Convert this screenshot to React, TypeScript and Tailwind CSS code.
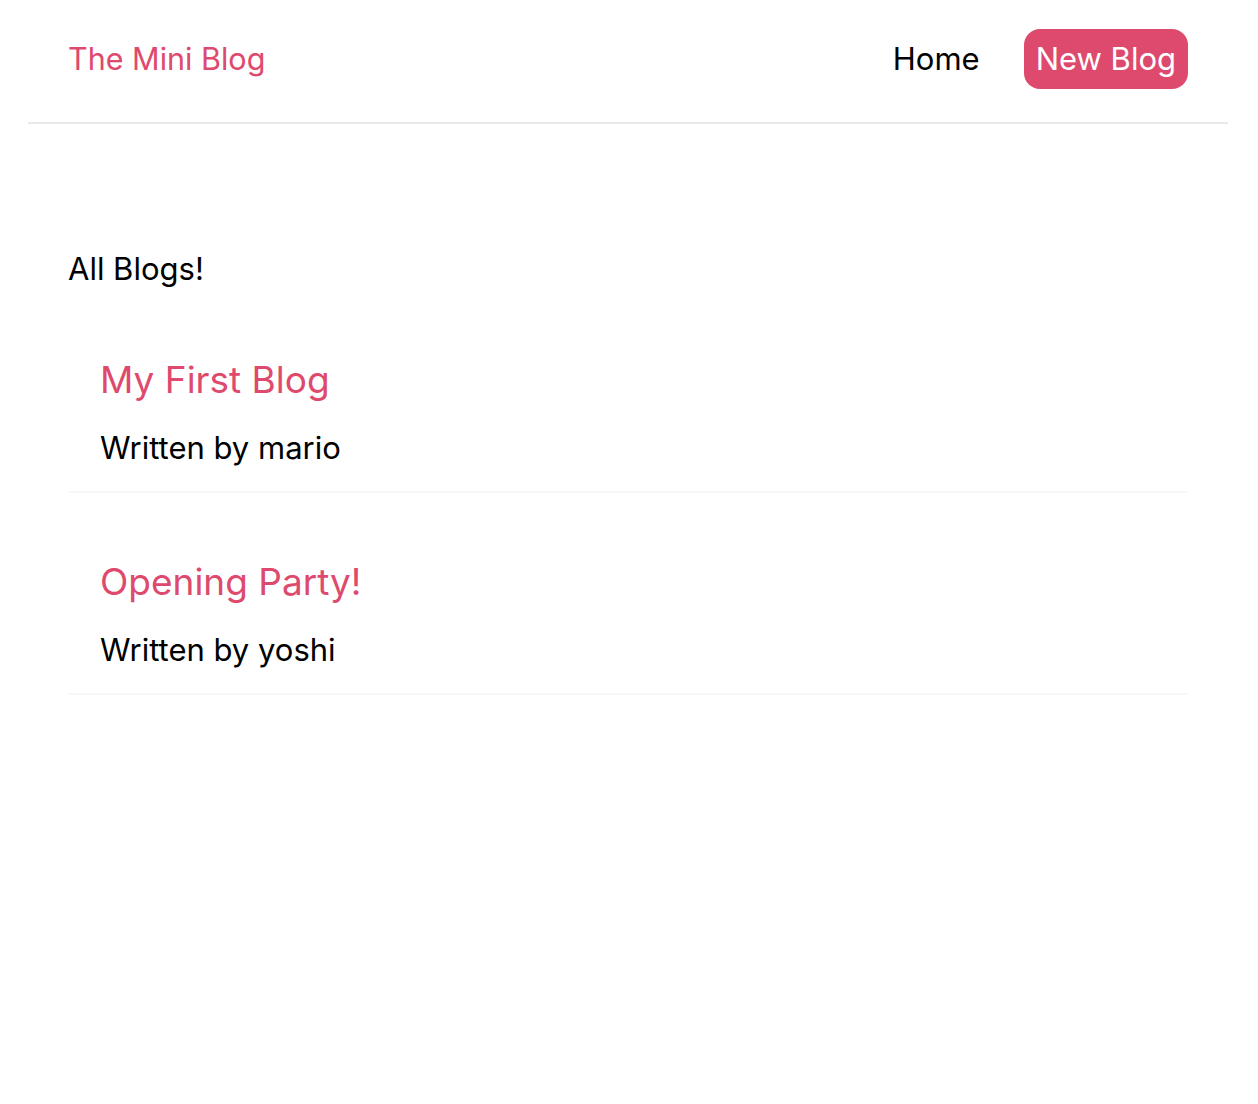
export default function App() {
  const blogs = [
    { id: 1, title: "My First Blog", author: "mario" },
    { id: 2, title: "Opening Party!", author: "yoshi" },
  ];
  return (
    <div className="min-h-screen bg-white text-black" style={{ fontFamily: "Inter, 'Noto Sans', sans-serif" }}>
      <nav className="ml-[28px] flex h-[124px] max-w-[1200px] items-center border-b-2 border-[#e9e9ec] px-[40px] pb-[4px]">
        <h1 className="text-[30.5px] font-normal text-[#de4a6e]">The Mini Blog</h1>
        <div className="ml-auto flex items-center">
          <a href="#" className="px-[12px] py-[12px] text-[31px] text-black">Home</a>
          <a href="#" className="ml-[32px] rounded-[16px] bg-[#de4a6e] px-[12px] py-[7px] text-[31px] text-white">New Blog</a>
        </div>
      </nav>
      <div className="ml-[28px] max-w-[1200px] px-[40px] pt-[123px]">
        <h2 className="text-[31px] leading-[44px]">All Blogs!</h2>
        <div className="mt-[45px]">
          {blogs.map((b) => (
            <div key={b.id} className="mb-[45px] border-b-2 border-[#f8f8f8] px-[32px] pt-[20px] pb-[23px]">
              <h2 className="mb-[24px] text-[37px] leading-[48px] text-[#de4a6e]">{b.title}</h2>
              <p className="text-[31px] leading-[40px]">Written by {b.author}</p>
            </div>
          ))}
        </div>
      </div>
    </div>
  );
}
